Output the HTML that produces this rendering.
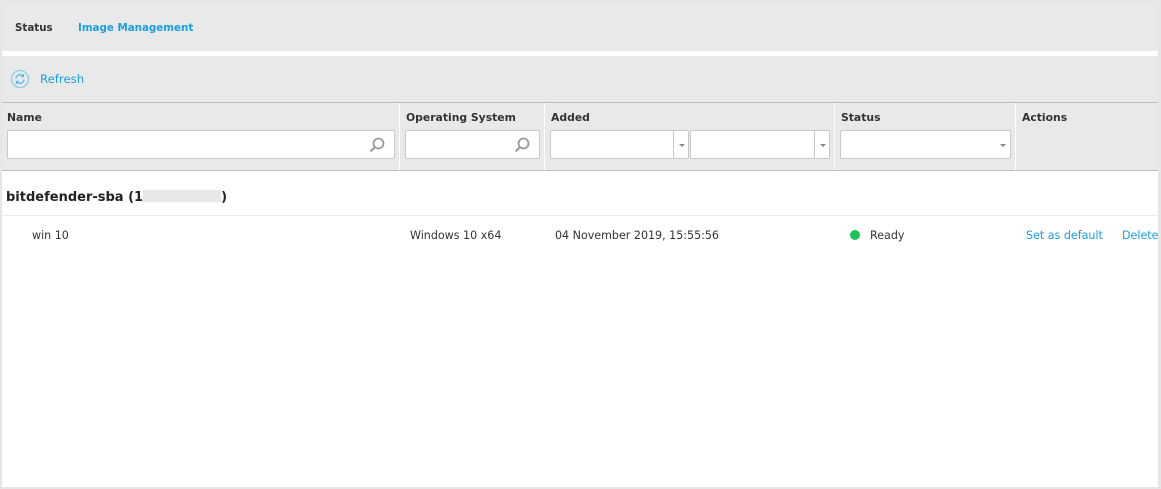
<!DOCTYPE html>
<html><head><style>
*{box-sizing:border-box;margin:0;padding:0}
body{width:1161px;height:489px;background:#fff;font-family:"DejaVu Sans",Verdana,sans-serif;font-size:11.1px;color:#333;position:relative;overflow:hidden}
.frame{position:absolute;left:0;top:0;width:1161px;height:489px;border:2px solid #e6e6e6;border-right:3px solid #e6e6e6}
.abs{position:absolute}
.inp{position:absolute;height:29px;background:#fff;border:1px solid #c9c9c9;border-radius:2px}
.sep{position:absolute;top:103px;width:1px;height:67px;background:#fff}
.h{position:absolute;top:111px;font-weight:bold;font-size:10.8px;color:#333}
.dd{position:absolute;top:0;right:0;width:15px;height:27px;border-left:1px solid #c9c9c9}
.dd:after{content:"";position:absolute;left:5px;top:13px;border:3px solid transparent;border-top:3px solid #888}
</style></head><body>
<div class="abs" style="left:0;top:0;width:1161px;height:51px;background:#e9e9e9"></div>
<div class="abs" style="left:0;top:56px;width:1161px;height:114px;background:#e9e9e9"></div>
<div class="abs" style="left:0;top:102px;width:1161px;height:1px;background:#bdbdbd"></div>
<div class="abs" style="left:0;top:170px;width:1161px;height:1px;background:#bdbdbd"></div>
<div class="abs" style="left:15px;top:22px;font-size:10.3px;font-weight:bold;color:#333">Status</div>
<div class="abs" style="left:78px;top:22px;font-size:10.3px;font-weight:bold;color:#1a9ee0">Image Management</div>
<svg class="abs" style="left:10px;top:69px" width="20" height="20" viewBox="0 0 20 20"><circle cx="10" cy="10" r="8.5" fill="none" stroke="#8ccbee" stroke-width="1.3"/><path d="M6 9.5a4 4 0 0 1 7-2.5M14 10.5a4 4 0 0 1-7 2.5" fill="none" stroke="#5fb6e6" stroke-width="1.3"/><path d="M13.5 5v2.5H11M6.5 15v-2.5H9" fill="none" stroke="#5fb6e6" stroke-width="1.2"/></svg>
<div class="abs" style="left:40px;top:72px;font-size:11.7px;color:#1a9ee0">Refresh</div>
<div class="sep" style="left:399px"></div><div class="sep" style="left:544px"></div><div class="sep" style="left:834px"></div><div class="sep" style="left:1015px"></div>
<div class="h" style="left:7px">Name</div>
<div class="h" style="left:406px">Operating System</div>
<div class="h" style="left:551px">Added</div>
<div class="h" style="left:841px">Status</div>
<div class="h" style="left:1022px">Actions</div>
<div class="inp" style="left:7px;top:130px;width:388px"><svg class="abs" style="right:9px;top:6px" width="16" height="16" viewBox="0 0 16 16"><circle cx="9.5" cy="6.5" r="5" fill="none" stroke="#999" stroke-width="1.8"/><path d="M6 10l-4.5 4.5" stroke="#999" stroke-width="2"/></svg></div>
<div class="inp" style="left:405px;top:130px;width:135px"><svg class="abs" style="right:9px;top:6px" width="16" height="16" viewBox="0 0 16 16"><circle cx="9.5" cy="6.5" r="5" fill="none" stroke="#999" stroke-width="1.8"/><path d="M6 10l-4.5 4.5" stroke="#999" stroke-width="2"/></svg></div>
<div class="inp" style="left:550px;top:130px;width:139px"><div class="dd"></div></div>
<div class="inp" style="left:690px;top:130px;width:140px"><div class="dd"></div></div>
<div class="inp" style="left:840px;top:130px;width:171px"><div class="dd" style="border-left:none"></div></div>
<div class="abs" style="left:6px;top:190px;font-size:13px;font-weight:bold;color:#222">bitdefender-sba (1<span style="display:inline-block;width:78px;height:12px;background:#e8e8e8;vertical-align:-1px"></span>)</div>
<div class="abs" style="left:2px;top:215px;width:1156px;height:1px;background:#ececec"></div>
<div class="abs" style="left:32px;top:229px">win 10</div>
<div class="abs" style="left:410px;top:229px">Windows 10 x64</div>
<div class="abs" style="left:555px;top:229px">04 November 2019, 15:55:56</div>
<div class="abs" style="left:850px;top:230px;width:10px;height:10px;border-radius:50%;background:#1ec15a"></div>
<div class="abs" style="left:870px;top:229px">Ready</div>
<div class="abs" style="left:1026px;top:229px;color:#1a9ee0">Set as default</div>
<div class="abs" style="left:1122px;top:229px;color:#1a9ee0">Delete</div>
<div class="frame"></div>
</body></html>
